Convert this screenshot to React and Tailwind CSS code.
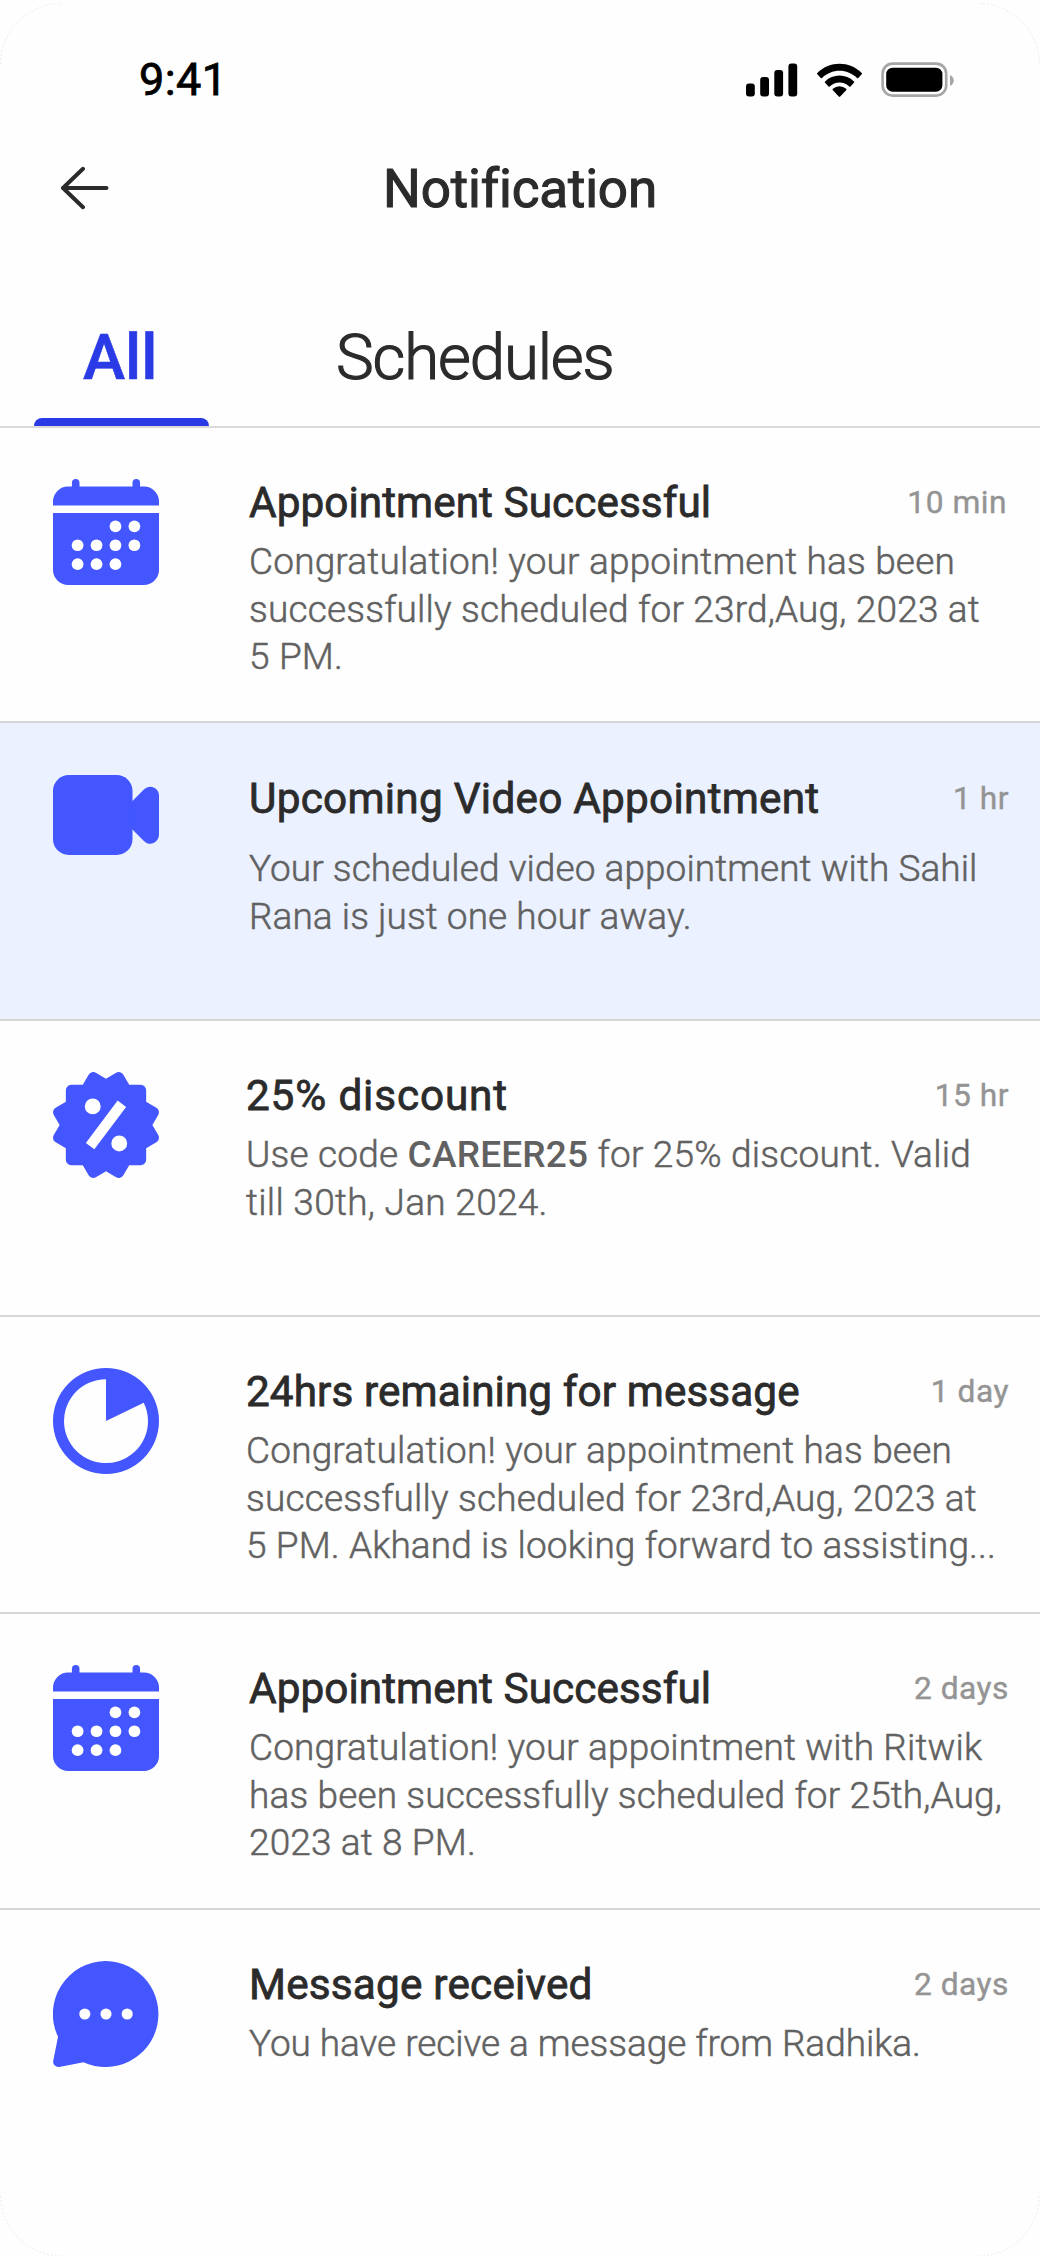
/**
 * App.jsx — Notification screen
 *
 * Status bar, header, tab switcher and the list of notifications.
 */

import { BiSolidOffer } from "react-icons/bi";

const CALENDAR_DOTS = [
  [16.5, 12.5],
  [21.5, 12.5],
  [6.5, 17.5],
  [11.5, 17.5],
  [16.5, 17.5],
  [21.5, 17.5],
  [6.5, 22.5],
  [11.5, 22.5],
  [16.5, 22.5],
];

const CalendarIcon = () => (
  <svg viewBox="0 0 28 28" className="size-[106px]" fill="currentColor">
    <path d="M0 7V6a4 4 0 0 1 4-4h1V1a1 1 0 0 1 2 0v1h14V1a1 1 0 0 1 2 0v1h1a4 4 0 0 1 4 4v1z" />
    <path d="M0 9h28v15a4 4 0 0 1-4 4H4a4 4 0 0 1-4-4z" />
    {CALENDAR_DOTS.map(([cx, cy]) => (
      <circle key={`${cx}-${cy}`} cx={cx} cy={cy} r="1.55" fill="#fff" />
    ))}
  </svg>
);

const VideoIcon = () => (
  <svg viewBox="0 0 20 20" className="size-[106px]" fill="currentColor">
    <rect width="15" height="15.1" rx="3" />
    <path d="M14.9 5 17.1 2.8C18.2 1.6 20 2.3 20 3.9v7.3c0 1.6-1.8 2.4-2.9 1.2l-2.2-2.2z" />
  </svg>
);

const OfferIcon = () => <BiSolidOffer viewBox="2 2 20 20" className="size-[106px]" />;

const TimerIcon = () => (
  <svg viewBox="0 0 20 20" className="size-[106px]" fill="currentColor">
    <path
      fillRule="evenodd"
      d="M10 0a10 10 0 1 1 0 20 10 10 0 0 1 0-20zm0 2.1a7.92 7.92 0 1 0 7.12 4.45L10 10z"
    />
  </svg>
);

const MessageIcon = () => (
  <svg viewBox="0 0 20 20" className="size-[106px]" fill="currentColor">
    <path d="M10 0a10 10 0 1 1-4.25 19.1l-4.6.88A1 1 0 0 1 .02 18.95l.93-4.65A10 10 0 0 1 10 0z" />
    <circle cx="6" cy="10" r="1.05" fill="#fff" />
    <circle cx="10" cy="10" r="1.05" fill="#fff" />
    <circle cx="14" cy="10" r="1.05" fill="#fff" />
  </svg>
);

const notifications = [
  {
    id: 1,
    icon: CalendarIcon,
    title: "Appointment Successful",
    time: "10 min",
    lines: [
      "Congratulation! your appointment has been",
      "successfully scheduled for 23rd,Aug, 2023 at",
      "5 PM.",
    ],
    row: "h-[295px] pt-[51px] pr-[33px]",
    text: "ml-[90px]",
    heading: "tracking-[0.05px]",
    body: "mt-[11px] tracking-[0.18px]",
  },
  {
    id: 2,
    icon: VideoIcon,
    title: "Upcoming Video Appointment",
    time: "1 hr",
    lines: [
      "Your scheduled video appointment with Sahil",
      "Rana is just one hour away.",
    ],
    row: "h-[298px] pt-[52px] pr-[31px] bg-[#ebf1ff]",
    text: "ml-[90px]",
    heading: "tracking-[0.25px]",
    body: "mt-[22px] tracking-[0.06px]",
  },
  {
    id: 3,
    icon: OfferIcon,
    title: "25% discount",
    time: "15 hr",
    lines: [
      <span className="tracking-[0.2px]">
        Use code <span className="font-medium [-webkit-text-stroke:0]">CAREER25</span> for 25% discount. Valid
      </span>,
      "till 30th, Jan 2024.",
    ],
    row: "h-[296px] pt-[51px] pr-[31px]",
    text: "ml-[87px]",
    heading: "tracking-[0.85px]",
    body: "mt-[11px] tracking-[0.3px]",
  },
  {
    id: 4,
    icon: TimerIcon,
    title: "24hrs remaining for message",
    time: "1 day",
    lines: [
      "Congratulation! your appointment has been",
      "successfully scheduled for 23rd,Aug, 2023 at",
      <span className="tracking-[0.12px]">5 PM. Akhand is looking forward to assisting...</span>,
    ],
    row: "h-[297px] pt-[51px] pr-[31px]",
    text: "ml-[87px]",
    heading: "tracking-[0.08px]",
    body: "mt-[11px] tracking-[0.18px]",
  },
  {
    id: 5,
    icon: CalendarIcon,
    title: "Appointment Successful",
    time: "2 days",
    lines: [
      "Congratulation! your appointment with Ritwik",
      "has been successfully scheduled for 25th,Aug,",
      "2023 at 8 PM.",
    ],
    row: "h-[296px] pt-[51px] pr-[31px]",
    text: "ml-[90px]",
    heading: "tracking-[0.05px]",
    body: "mt-[11px] tracking-[0.14px]",
  },
  {
    id: 6,
    icon: MessageIcon,
    title: "Message received",
    time: "2 days",
    lines: ["You have recive a message from Radhika."],
    row: "h-[346px] pt-[51px] pr-[31px] border-transparent",
    text: "ml-[90px]",
    heading: "tracking-[0.2px]",
    body: "mt-[11px] tracking-[-0.06px]",
  },
];

const StatusBar = () => (
  <div className="flex h-[150px] items-start justify-between pt-[53px] pr-[86px] pl-[139px]">
    <span className="text-[45px] leading-[53px] tracking-[0.4px] text-black [-webkit-text-stroke:0.8px]">9:41</span>
    <svg viewBox="0 0 208 36" className="mt-[9px] h-9 w-[208px]">
      <rect x="0" y="21.5" width="8.8" height="13" rx="3" />
      <rect x="14.2" y="15" width="8.8" height="19.5" rx="3" />
      <rect x="28.3" y="8" width="8.8" height="26.5" rx="3" />
      <rect x="42.4" y="1.5" width="8.8" height="33" rx="3" />
      <path
        transform="translate(71 1.9) scale(2.65 2.75)"
        d="M8.5 2.46c2.46 0 4.83.95 6.61 2.64.14.13.35.13.48 0l1.28-1.3a.36.36 0 0 0 0-.51C12.19-1.16 4.81-1.16.13 3.29a.36.36 0 0 0 0 .51l1.29 1.3c.13.13.34.13.48 0C3.67 3.41 6.04 2.46 8.5 2.46Zm0 4.34c1.35 0 2.66.51 3.67 1.41.13.13.35.13.48 0l1.28-1.32a.37.37 0 0 0 0-.52 7.9 7.9 0 0 0-10.86 0 .37.37 0 0 0 0 .52l1.28 1.32c.13.13.35.13.48 0A5.5 5.5 0 0 1 8.5 6.8Zm2.51 2.8a.36.36 0 0 0-.01-.52 3.84 3.84 0 0 0-5 0 .36.36 0 0 0 0 .52l2.22 2.28a.36.36 0 0 0 .52 0Z"
      />
      <rect x="136.6" y="1.6" width="63.6" height="32" rx="10" fill="none" stroke="#a6a6a6" strokeWidth="2.6" />
      <rect x="140.2" y="5.7" width="56.2" height="24" rx="6.5" />
      <path d="M204 13v11c2.3-1 3.8-3.1 3.8-5.5S206.3 14 204 13z" fill="#a6a6a6" />
    </svg>
  </div>
);

const Header = () => (
  <header className="flex h-[138px] items-start pl-[60px]">
    <button type="button" aria-label="Back" className="mt-4 w-[50px]">
      <svg
        viewBox="0 0 50 44"
        className="h-11 w-[50px]"
        fill="none"
        stroke="#2b2b2b"
        strokeWidth="4"
        strokeLinecap="round"
        strokeLinejoin="round"
      >
        <path d="M46.5 22H3M23 2.8 3 22l20 19.2" />
      </svg>
    </button>
    <h1 className="mt-2 ml-[273px] text-[53px] leading-[62px] font-normal tracking-[-0.15px] [-webkit-text-stroke:1.1px]">
      Notification
    </h1>
  </header>
);

const Tabs = () => (
  <nav className="flex h-[140px] items-stretch border-b-2 border-[#dadada] pl-[34px] text-[63.5px] leading-[74px]">
    <button
      type="button"
      className="flex w-[175px] flex-col items-start justify-between pt-[33px] font-medium text-[#2a3be6] [-webkit-text-stroke:0.6px]"
    >
      <span className="ml-[49px]">All</span>
      <span className="h-2 w-full rounded-t-lg bg-[#2a3be6]" />
    </button>
    <button
      type="button"
      className="ml-[127px] flex items-start pt-[33px] font-light tracking-[-1.1px] [-webkit-text-stroke:1.2px]"
    >
      Schedules
    </button>
  </nav>
);

const NotificationRow = ({ item }) => {
  const Icon = item.icon;

  return (
    <li className={`flex items-start border-b-2 border-[#d6d6d6] pl-[53px] ${item.row}`}>
      <span className="shrink-0 text-[#4356ff]">
        <Icon />
      </span>
      <div className={`min-w-0 flex-1 ${item.text}`}>
        <div className="flex justify-between leading-[48px] whitespace-nowrap">
          <h2 className={`text-[42.3px] [-webkit-text-stroke:0.8px] ${item.heading}`}>{item.title}</h2>
          <span className="text-[31.75px] tracking-[0.5px] text-[#949494] [-webkit-text-stroke:0.4px]">
            {item.time}
          </span>
        </div>
        <div
          className={`text-[37px] leading-[47.6px] font-light whitespace-nowrap text-[#616161] [-webkit-text-stroke:0.5px] ${item.body}`}
        >
          {item.lines.map((line, i) => (
            <p key={i}>{line}</p>
          ))}
        </div>
      </div>
    </li>
  );
};

// Hairline that follows the rounded corners of the screen
const ScreenCorners = () => (
  <svg
    viewBox="0 0 1040 2256"
    className="pointer-events-none absolute inset-0 h-full w-full"
    fill="none"
    stroke="#ececec"
    strokeDasharray="2 2"
  >
    <path d="M.5 64A61 61 0 0 1 61.5 3.5M979 3.5A61 61 0 0 1 1039.5 64M.5 2196A61 61 0 0 0 61.5 2256M979 2256A61 61 0 0 0 1039.5 2196" />
  </svg>
);

const App = () => {
  return (
    <main className="relative h-[2256px] w-[1040px] overflow-hidden bg-[#fefefe] font-['Roboto',sans-serif] text-[#2b2b2b]">
      <StatusBar />
      <Header />
      <Tabs />
      <ul>
        {notifications.map((item) => (
          <NotificationRow key={item.id} item={item} />
        ))}
      </ul>
      <ScreenCorners />
    </main>
  );
};

export default App;
